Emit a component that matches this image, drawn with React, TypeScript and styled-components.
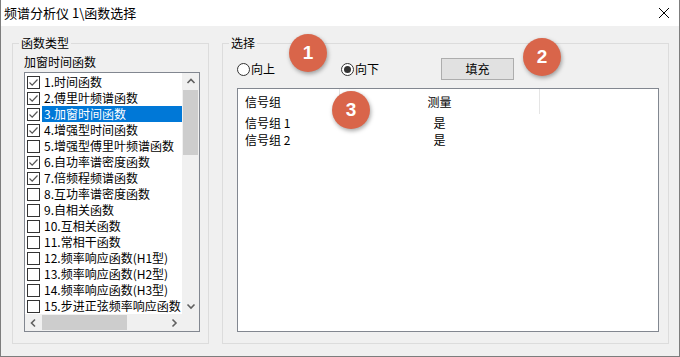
import React from "react";
import styled, { createGlobalStyle } from "styled-components";

const Global = createGlobalStyle`
  html, body { margin: 0; padding: 0; background: #ffffff; }
  body { font-family: "Noto Sans CJK SC", "Noto Sans", sans-serif; font-size: 12px; color: #000; }
  * { box-sizing: border-box; }
`;

const Window = styled.div`
  position: relative;
  width: 680px;
  height: 357px;
  display: flex;
  flex-direction: column;
  border: 1px solid #7d7d7d;
  border-top: none;
  background: #f0f0f0;
  overflow: hidden;
`;

const TitleBar = styled.div`
  height: 26px;
  flex: none;
  background: #ffffff;
  display: flex;
  align-items: center;
  justify-content: space-between;
  padding: 0 9px 0 3px;
  font-size: 13px;
  line-height: 26px;
  color: #000;
`;

const Body = styled.div`
  flex: 1;
  display: flex;
  gap: 13px;
  padding: 10px 10px 0 11px;
`;

const GroupBox = styled.fieldset<{ $width?: number }>`
  margin: 0;
  height: 308px;
  border: 1px solid #dcdcdc;
  padding: ${(p) => (p.$width ? "5px 8px 0 11px" : "8px 9px 0 14px")};
  ${(p) => (p.$width ? `width: ${p.$width}px; flex: none;` : "flex: 1; min-width: 0;")}
  display: flex;
  flex-direction: column;
`;

const Legend = styled.legend<{ $offset: number }>`
  margin-left: ${(p) => p.$offset}px;
  padding: 0 2px;
  font-size: 12px;
  line-height: 14px;
`;

const FieldLabel = styled.div`
  line-height: 14px;
  margin-bottom: 3px;
`;

const ListBox = styled.div`
  width: 176px;
  height: 260px;
  border: 1px solid #828790;
  background: #fff;
  display: grid;
  grid-template-columns: 1fr 17px;
  grid-template-rows: 1fr 17px;
`;

const Viewport = styled.div`
  overflow: hidden;
  padding-top: 1px;
`;

const Row = styled.div`
  height: 16px;
  display: flex;
  align-items: center;
  padding-left: 2px;
`;

const Box = styled.span`
  flex: none;
  width: 13px;
  height: 13px;
  border: 1px solid #333333;
  background: #fff;
  display: flex;
  align-items: center;
  justify-content: center;
  margin-right: 2px;
`;

const ItemText = styled.span<{ $selected?: boolean }>`
  flex: 1;
  height: 16px;
  line-height: 16px;
  padding-left: 2px;
  white-space: nowrap;
  overflow: hidden;
  background: ${(p) => (p.$selected ? "#0078d7" : "transparent")};
  color: ${(p) => (p.$selected ? "#fff" : "#000")};
`;

const VScroll = styled.div`
  background: #f0f0f0;
  display: flex;
  flex-direction: column;
`;

const HScroll = styled.div`
  background: #f0f0f0;
  display: flex;
  align-items: stretch;
`;

const Corner = styled.div`
  background: #f0f0f0;
`;

const ArrowBtn = styled.div`
  width: 17px;
  height: 17px;
  flex: none;
  display: flex;
  align-items: center;
  justify-content: center;
`;

const VThumb = styled.div`
  height: 65px;
  margin: 0 1px;
  background: #cdcdcd;
`;

const HThumb = styled.div`
  width: 85px;
  margin: 1px 0;
  background: #cdcdcd;
`;

const Spacer = styled.div`
  flex: 1;
`;

const RadioRow = styled.div`
  height: 22px;
  display: flex;
  align-items: center;
  margin-bottom: 8px;
`;

const RadioLabel = styled.label<{ $width: number }>`
  width: ${(p) => p.$width}px;
  display: flex;
  align-items: center;
  line-height: 14px;
`;

const RadioCircle = styled.span<{ $on?: boolean }>`
  width: 13px;
  height: 13px;
  border-radius: 50%;
  border: 1px solid #333;
  background: #fff;
  margin-right: 1px;
  display: flex;
  align-items: center;
  justify-content: center;
  &::after {
    content: "";
    display: ${(p) => (p.$on ? "block" : "none")};
    width: 7px;
    height: 7px;
    border-radius: 50%;
    background: #333;
  }
`;

const Button = styled.button`
  width: 73px;
  height: 22px;
  border: 1px solid #adadad;
  background: #e1e1e1;
  font-family: inherit;
  font-size: 12px;
  line-height: 14px;
  color: #000;
  padding: 0;
`;

const ListView = styled.div`
  height: 244px;
  border: 1px solid #828790;
  background: #fff;
  display: flex;
  flex-direction: column;
`;

const LvRow = styled.div<{ $header?: boolean }>`
  display: flex;
  height: ${(p) => (p.$header ? 25 : 17)}px;
  line-height: ${(p) => (p.$header ? 25 : 17)}px;
`;

const Cell = styled.div<{ $w: number; $center?: boolean; $sep?: boolean }>`
  width: ${(p) => p.$w}px;
  flex: none;
  padding-left: ${(p) => (p.$center ? 0 : 7)}px;
  text-align: ${(p) => (p.$center ? "center" : "left")};
  border-right: 1px solid ${(p) => (p.$sep ? "#e5e5e5" : "transparent")};
  white-space: nowrap;
`;

const Badge = styled.div<{ $x: number; $y: number }>`
  position: absolute;
  left: ${(p) => p.$x - 19}px;
  top: ${(p) => p.$y - 19}px;
  width: 38px;
  height: 38px;
  border-radius: 50%;
  background: #d9654a;
  box-shadow: 1px 2px 4px rgba(0, 0, 0, 0.35);
  color: #fff;
  font-family: "Liberation Sans", Arial, sans-serif;
  font-weight: bold;
  font-size: 19px;
  display: flex;
  align-items: center;
  justify-content: center;
`;

const Chevron = ({ dir }: { dir: "up" | "down" | "left" | "right" }) => {
  const paths: Record<string, string> = {
    up: "M1.5 6 L5 2.5 L8.5 6",
    down: "M1.5 3.5 L5 7 L8.5 3.5",
    left: "M6 1.5 L2.5 5 L6 8.5",
    right: "M3.5 1.5 L7 5 L3.5 8.5",
  };
  return (
    <svg width="10" height="10" viewBox="0 0 10 10">
      <path d={paths[dir]} fill="none" stroke="#606060" strokeWidth="1.6" />
    </svg>
  );
};

const Check = () => (
  <svg width="11" height="11" viewBox="0 0 11 11">
    <path d="M1.5 5.5 L4.2 8.2 L9.5 2.5" fill="none" stroke="#555" strokeWidth="1.2" />
  </svg>
);

const items = [
  { t: "1.时间函数", c: true },
  { t: "2.傅里叶频谱函数", c: true },
  { t: "3.加窗时间函数", c: true, s: true },
  { t: "4.增强型时间函数", c: true },
  { t: "5.增强型傅里叶频谱函数", c: false },
  { t: "6.自功率谱密度函数", c: true },
  { t: "7.倍频程频谱函数", c: true },
  { t: "8.互功率谱密度函数", c: false },
  { t: "9.自相关函数", c: false },
  { t: "10.互相关函数", c: false },
  { t: "11.常相干函数", c: false },
  { t: "12.频率响应函数(H1型)", c: false },
  { t: "13.频率响应函数(H2型)", c: false },
  { t: "14.频率响应函数(H3型)", c: false },
  { t: "15.步进正弦频率响应函数", c: false },
];

const rows = [
  { name: "信号组 1", m: "是" },
  { name: "信号组 2", m: "是" },
];

export default function App() {
  return (
    <>
      <Global />
      <Window>
        <TitleBar>
          <span>频谱分析仪 1\函数选择</span>
          <svg width="12" height="12" viewBox="0 0 12 12">
            <path d="M1 1 L11 11 M11 1 L1 11" stroke="#000" strokeWidth="1" />
          </svg>
        </TitleBar>
        <Body>
          <GroupBox $width={197}>
            <Legend $offset={-5}>函数类型</Legend>
            <FieldLabel>加窗时间函数</FieldLabel>
            <ListBox>
              <Viewport>
                {items.map((it) => (
                  <Row key={it.t}>
                    <Box>{it.c && <Check />}</Box>
                    <ItemText $selected={it.s}>{it.t}</ItemText>
                  </Row>
                ))}
              </Viewport>
              <VScroll>
                <ArrowBtn>
                  <Chevron dir="up" />
                </ArrowBtn>
                <VThumb />
                <Spacer />
                <ArrowBtn>
                  <Chevron dir="down" />
                </ArrowBtn>
              </VScroll>
              <HScroll>
                <ArrowBtn>
                  <Chevron dir="left" />
                </ArrowBtn>
                <HThumb />
                <Spacer />
                <ArrowBtn>
                  <Chevron dir="right" />
                </ArrowBtn>
              </HScroll>
              <Corner />
            </ListBox>
          </GroupBox>
          <GroupBox>
            <Legend $offset={-8}>选择</Legend>
            <RadioRow>
              <RadioLabel $width={104}>
                <RadioCircle />
                向上
              </RadioLabel>
              <RadioLabel $width={100}>
                <RadioCircle $on />
                向下
              </RadioLabel>
              <Button>填充</Button>
            </RadioRow>
            <ListView>
              <LvRow $header>
                <Cell $w={102} $sep>
                  信号组
                </Cell>
                <Cell $w={200} $center $sep>
                  测量
                </Cell>
              </LvRow>
              {rows.map((r) => (
                <LvRow key={r.name}>
                  <Cell $w={102}>{r.name}</Cell>
                  <Cell $w={200} $center>
                    {r.m}
                  </Cell>
                </LvRow>
              ))}
            </ListView>
          </GroupBox>
        </Body>
        <Badge $x={307} $y={53}>1</Badge>
        <Badge $x={541} $y={57}>2</Badge>
        <Badge $x={350} $y={110}>3</Badge>
      </Window>
    </>
  );
}
